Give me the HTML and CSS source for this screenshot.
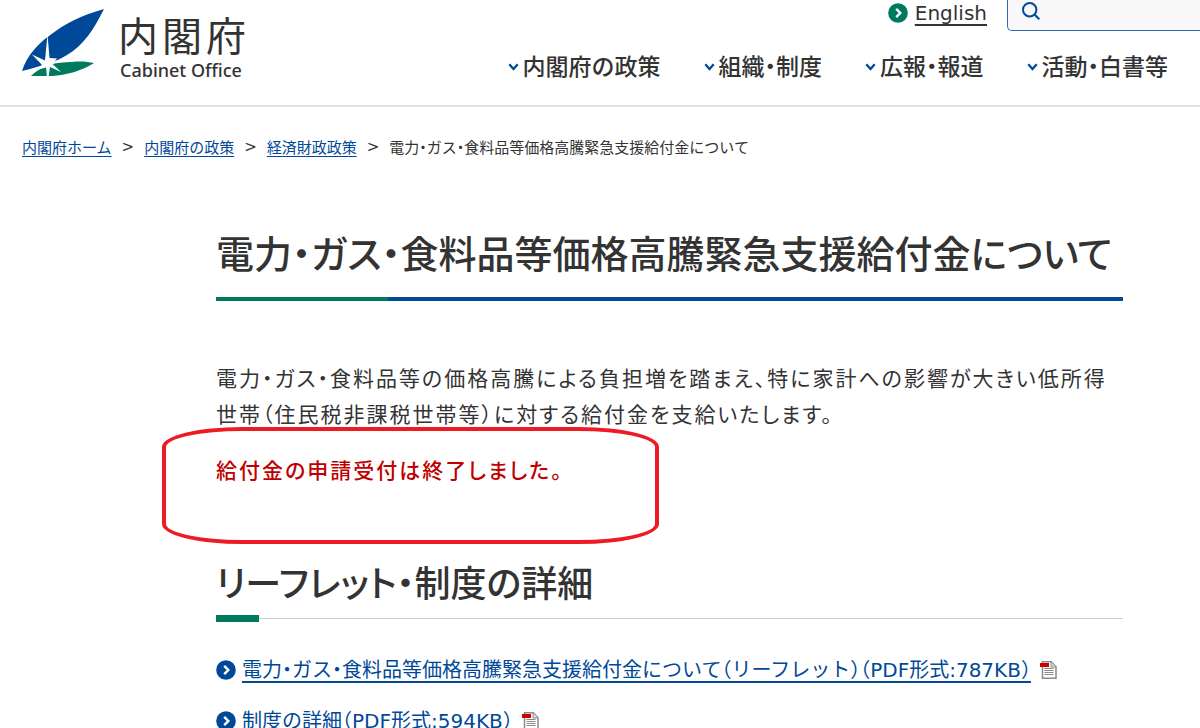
FILE: index.html
```html
<!DOCTYPE html>
<html lang="ja">
<head>
<meta charset="utf-8">
<meta name="viewport" content="width=device-width, initial-scale=1">
<title>電力・ガス・食料品等価格高騰緊急支援給付金について - 内閣府</title>
<link rel="stylesheet" href="styles.css">
</head>
<body>
<svg width="0" height="0" class="defs" aria-hidden="true">
  <symbol id="arrow" viewBox="0 0 20 20"><circle cx="10" cy="10" r="9.8" fill="currentColor"/><path d="M8.2 5.8 12.3 10l-4.1 4.2" fill="none" stroke="#fff" stroke-width="2.4"/></symbol>
  <symbol id="down" viewBox="0 0 11 8"><path d="M1.3 1.3 5.5 6l4.2-4.7" fill="none" stroke="#004898" stroke-width="2.3"/></symbol>
  <symbol id="pdf" viewBox="0 0 17 18"><path d="M2.5.8h8.7l4.8 4.9v11.5H2.5z" fill="#fff" stroke="#8a8a8a" stroke-width="1.5"/><path d="M11 1v5h5" fill="#ddd" stroke="#8a8a8a"/><path d="M4.5 7.500h9M4.5 9.500h9M4.5 11.500h9M4.5 13.500h9" stroke="#8a8a8a"/><path d="M0 2h9v4H0z" fill="#c00"/></symbol>
</svg>
<header class="header">
  <a class="logo" href="#">
    <svg class="logo-mark" viewBox="0 0 82 68" aria-hidden="true">
      <path d="M82 0C72 20 62 36 45 46 34 53 16 58 0 62 5 46 17 34 27 27 42 15 60 6 82 0z" fill="#004898"/>
      <path d="M9 67C20 56 34 53 50 53 60 52 66 53 72 54 60 62 44 66 30 67z" fill="#007a5e"/>
      <path d="M25.500 25 27.500 49 35 49.500 30.500 55 39 63 28 58 26.500 68 25 68 24 58.500 7 63 20 56 10 45.500 23 51.500z" fill="#fff"/>
    </svg>
    <span class="logo-text"><span class="logo-ja">内閣府</span><span class="logo-en">Cabinet Office</span></span>
  </a>
  <div class="header-side">
    <div class="tools">
      <a class="english" href="#"><svg class="arrow-icon" aria-hidden="true"><use href="#arrow"/></svg><span>English</span></a>
      <label class="search">
        <svg viewBox="0 0 18 18" aria-hidden="true"><circle cx="7.700" cy="7.700" r="6.700"/><path d="m12.500 12.500 4.800 4.800"/></svg>
        <input type="search" aria-label="サイト内検索">
      </label>
    </div>
    <nav class="nav" aria-label="メインメニュー">
      <a href="#"><svg aria-hidden="true"><use href="#down"/></svg>内閣府の政策</a>
      <a href="#"><svg aria-hidden="true"><use href="#down"/></svg>組織・制度</a>
      <a href="#"><svg aria-hidden="true"><use href="#down"/></svg>広報・報道</a>
      <a href="#"><svg aria-hidden="true"><use href="#down"/></svg>活動・白書等</a>
    </nav>
  </div>
</header>
<nav class="crumbs" aria-label="パンくずリスト">
  <a href="#">内閣府ホーム</a><span class="sep">&gt;</span>
  <a href="#">内閣府の政策</a><span class="sep">&gt;</span>
  <a href="#">経済財政政策</a><span class="sep">&gt;</span>
  <span>電力・ガス・食料品等価格高騰緊急支援給付金について</span>
</nav>
<main class="main">
  <h1>電力・ガス・食料品等価格高騰緊急支援給付金について</h1>
  <p class="lead">電力・ガス・食料品等の価格高騰による負担増を踏まえ、特に家計への影響が大きい低所得世帯（住民税非課税世帯等）に対する給付金を支給いたします。</p>
  <p class="notice">給付金の申請受付は終了しました。</p>
  <h2>リーフレット・制度の詳細</h2>
  <ul class="links">
    <li><svg class="arrow-icon" aria-hidden="true"><use href="#arrow"/></svg><a href="#">電力・ガス・食料品等価格高騰緊急支援給付金について（リーフレット）（PDF形式:787KB）</a><svg class="pdf" aria-hidden="true"><use href="#pdf"/></svg></li>
    <li><svg class="arrow-icon" aria-hidden="true"><use href="#arrow"/></svg><a href="#">制度の詳細（PDF形式:594KB）</a><svg class="pdf" aria-hidden="true"><use href="#pdf"/></svg></li>
  </ul>
</main>
</body>
</html>
```
FILE: styles.css
```css
*, *::after { box-sizing: border-box; }
body {
  margin: 0;
  background: #fff;
  color: #333;
  font-family: "Noto Sans CJK JP", sans-serif;
  font-feature-settings: "halt";
  overflow-x: hidden;
}
h1, h2, p, ul { margin: 0; padding: 0; }
.defs { position: absolute; }
.arrow-icon { width: 20px; height: 20px; flex: none; }

.header {
  display: flex;
  justify-content: space-between;
  padding-left: 22px;
  height: 107px;
  border-bottom: 2px solid #e2e2e2;
}
.logo { display: flex; gap: 14px; padding-top: 9px; color: #333; text-decoration: none; }
.logo-mark { width: 82px; height: 68px; }
.logo-text { display: flex; flex-direction: column; }
.logo-ja { font-size: 40px; line-height: 50px; letter-spacing: 4px; }
.logo-en { font: 500 18px/22px "Noto Sans", sans-serif; padding-left: 2px; }
.header-side { display: flex; flex-direction: column; align-items: flex-end; }
.tools { display: flex; align-items: flex-start; gap: 20px; }
.english {
  display: flex;
  align-items: center;
  gap: 7px;
  color: #007a5e;
  font: 20px/24px "DejaVu Sans", sans-serif;
  padding-top: 1px;
  text-decoration: none;
}
.english span { color: #333; text-decoration: underline; text-underline-offset: 4px; }
.search {
  display: flex;
  align-items: center;
  width: 193px;
  height: 31px;
  padding: 0 0 8px 14px;
  background: #f8f8f8;
  border: 1px solid #2f6bb0;
  border-width: 0 0 1px 1px;
  border-radius: 0 0 0 5px;
}
.search svg { width: 18px; height: 18px; flex: none; fill: none; stroke: #004898; stroke-width: 2; }
.search input { flex: 1; min-width: 0; border: 0; background: transparent; outline: 0; }
.nav { display: flex; gap: 43px; padding: 18px 32px 0 0; }
.nav a {
  display: flex;
  align-items: center;
  gap: 4px;
  color: #333;
  font-size: 23px;
  font-weight: 500;
  line-height: 32px;
  text-decoration: none;
  white-space: nowrap;
}
.nav svg { width: 11px; height: 8px; margin-top: 3px; }

.crumbs {
  display: flex;
  flex-wrap: wrap;
  padding: 28px 22px 0;
  font-size: 15px;
  line-height: 24px;
}
.crumbs a { color: #004898; text-underline-offset: 3px; }
.sep { padding: 0 10px; font-family: "DejaVu Sans", sans-serif; font-size: 15px; }

.main { padding: 62px 77px 0 216px; }
h1 {
  padding-bottom: 14px;
  border-bottom: 4px solid;
  border-image: linear-gradient(to right, #007a5e 19%, #004898 19%) 1;
  font-size: 38px;
  font-weight: 500;
  line-height: 62px;
  font-feature-settings: "palt";
}
.lead, .notice {
  font-size: 21px;
  line-height: 36px;
  letter-spacing: 2px;
  font-feature-settings: "palt";
}
.lead { padding-top: 58px; }
.notice { position: relative; padding-top: 20px; color: #c00000; font-weight: 500; }
.notice::after {
  content: "";
  position: absolute;
  top: -4px;
  left: -54px;
  width: 497px;
  height: 117px;
  border: 4px solid #ed1c24;
  border-radius: 80px / 20px;
}
h2 {
  position: relative;
  margin-top: 69px;
  padding-bottom: 12px;
  border-bottom: 1px solid #ccc;
  font-size: 36px;
  font-weight: 500;
  line-height: 50px;
  font-feature-settings: "palt";
}
h2::after {
  content: "";
  position: absolute;
  left: 0;
  bottom: -4px;
  width: 43px;
  height: 7px;
  background: #007a5e;
}
.links { padding-top: 33px; list-style: none; }
.links li {
  display: flex;
  align-items: center;
  margin-bottom: 15px;
  color: #004898;
  line-height: 36px;
}
.links a {
  margin: 0 9px 0 6px;
  color: #004898;
  font-family: "DejaVu Sans", "Noto Sans CJK JP", sans-serif;
  font-size: 20px;
  text-underline-offset: 4px;
}
.pdf { width: 17px; height: 18px; flex: none; }
```
